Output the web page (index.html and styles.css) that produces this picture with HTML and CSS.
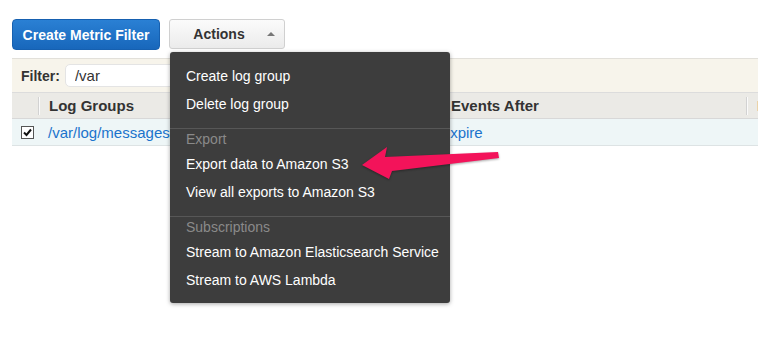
FILE: index.html
```html
<!DOCTYPE html>
<html lang="en">
<head>
  <meta charset="UTF-8" />
  <title>CloudWatch Logs</title>
  <link rel="stylesheet" href="styles.css">
</head>
<body>
  <div class="page">
    <!-- toolbar -->
    <div class="toolbar">
      <button class="btn-primary">Create Metric Filter</button>
      <div class="actions-wrap">
        <button class="btn-actions">Actions <span class="caret"></span></button>

        <div class="menu">
          <div class="menu-item">Create log group</div>
          <div class="menu-item">Delete log group</div>
          <div class="menu-section">
            <div class="menu-header">Export</div>
            <div class="menu-item">Export data to Amazon S3</div>
            <div class="menu-item">View all exports to Amazon S3</div>
          </div>
          <div class="menu-section">
            <div class="menu-header">Subscriptions</div>
            <div class="menu-item">Stream to Amazon Elasticsearch Service</div>
            <div class="menu-item">Stream to AWS Lambda</div>
          </div>
        </div>
      </div>
    </div>

    <!-- filter -->
    <div class="filter-bar">
      <label class="filter-label">Filter:</label>
      <input class="filter-input" type="text" value="/var">
    </div>

    <!-- table -->
    <div class="grid">
      <div class="row head">
        <div class="cell check-cell"></div>
        <div class="cell">Log Groups</div>
        <div class="cell">Expire Events After</div>
        <div class="cell">Metric Filters</div>
      </div>
      <div class="row selected">
        <div class="cell check-cell">
          <span class="check">
            <svg width="9" height="9" viewBox="0 0 9 9"><path d="M1 4.5 L3.5 7 L8 1.5" fill="none" stroke="#111" stroke-width="2"/></svg>
          </span>
        </div>
        <div class="cell"><a href="#">/var/log/messages</a></div>
        <div class="cell"><a href="#">Never Expire</a></div>
        <div class="cell"></div>
      </div>
    </div>
  </div>

  <!-- callout arrow -->
  <svg class="callout" width="758" height="344" viewBox="0 0 758 344">
    <polygon points="362,165 387,147 385,157 498,152 499,158 392,171 389,179" fill="#f3135a"/>
  </svg>
</body>
</html>
```

FILE: styles.css
```css
html, body {
  margin: 0;
  padding: 0;
  overflow: hidden;
  background: #fff;
}
body {
  font-family: "Liberation Sans", Arial, sans-serif;
  font-size: 14px;
  color: #333;
  width: 758px;
  height: 344px;
  position: relative;
}
.page {
  padding: 19px 0 0 12px;
}

/* toolbar */
.toolbar {
  display: flex;
  gap: 9px;
  height: 30px;
}
button {
  font-family: inherit;
  font-size: 14px;
  font-weight: bold;
  cursor: pointer;
}
.btn-primary {
  width: 148px;
  height: 31px;
  border: 1px solid #1660b0;
  border-radius: 4px;
  background: linear-gradient(#2a80d4, #1867bb);
  color: #fff;
  padding: 0;
}
.actions-wrap {
  position: relative;
}
.btn-actions {
  width: 116px;
  height: 30px;
  border: 1px solid #d0d0d0;
  border-radius: 3px;
  background: linear-gradient(#fbfbfb, #ebebeb);
  color: #333;
  padding: 0 0 0 14px;
  display: flex;
  align-items: center;
  justify-content: center;
}
.caret {
  width: 0;
  height: 0;
  margin-left: 22px;
  margin-top: -1px;
  border-left: 4px solid transparent;
  border-right: 4px solid transparent;
  border-bottom: 4px solid #777;
}

/* dropdown */
.menu {
  position: absolute;
  top: 33px;
  left: 1px;
  width: 280px;
  padding: 10px 0 9px;
  background: #3d3d3d;
  border-radius: 3px;
  box-shadow: 0 1px 4px rgba(0, 0, 0, 0.35);
  z-index: 5;
}
.menu-item {
  height: 28px;
  line-height: 28px;
  padding-left: 16px;
  color: #fff;
  white-space: nowrap;
}
.menu-section {
  margin-top: 10px;
  border-top: 1px solid #575757;
}
.menu-header {
  height: 21px;
  line-height: 21px;
  padding-left: 16px;
  color: #8a8a8a;
}

/* filter */
.filter-bar {
  margin-top: 9px;
  height: 33px;
  border-top: 1px solid #e2e0da;
  background: #f7f4eb;
  display: flex;
  align-items: center;
  padding-left: 9px;
  gap: 5px;
}
.filter-label {
  font-weight: bold;
  font-size: 14px;
  color: #333;
}
.filter-input {
  width: 240px;
  height: 23px;
  box-sizing: border-box;
  border: 1px solid #e4e4e4;
  border-radius: 5px;
  padding: 0 9px;
  font-family: inherit;
  font-size: 15px;
  color: #333;
  background: #fff;
}

/* table */
.grid {
  width: 820px;
}
.row {
  display: grid;
  grid-template-columns: 26px 352px 356px 1fr;
  align-items: center;
}
.row.head {
  height: 25px;
  background: #ebeae6;
  border-top: 1px solid #dcdcdc;
  border-bottom: 1px solid #d8d8d8;
  font-weight: bold;
  font-size: 15px;
  color: #333;
}
.row.head .cell {
  height: 18px;
  line-height: 18px;
}
.row.head .cell + .cell {
  border-left: 1px solid #d2d2d2;
  box-shadow: inset 1px 0 0 #fafafa;
}
.row.selected {
  height: 26px;
  background: #eef6f7;
  border-bottom: 1px solid #dde3e4;
  font-size: 15px;
}
.cell {
  padding-left: 10px;
  white-space: nowrap;
  overflow: hidden;
}
.row.selected .cell:nth-child(3) {
  padding-left: 6px;
}
.check-cell {
  padding-left: 4px;
  display: flex;
  justify-content: center;
}
.check {
  width: 11px;
  height: 11px;
  border: 1px solid #555;
  background: #fff;
  display: flex;
  align-items: center;
  justify-content: center;
}
a {
  color: #1a73cc;
  text-decoration: none;
}

.callout {
  position: absolute;
  left: 0;
  top: 0;
  z-index: 10;
  pointer-events: none;
  filter: drop-shadow(0 1px 1px rgba(0, 0, 0, 0.35));
}
```
